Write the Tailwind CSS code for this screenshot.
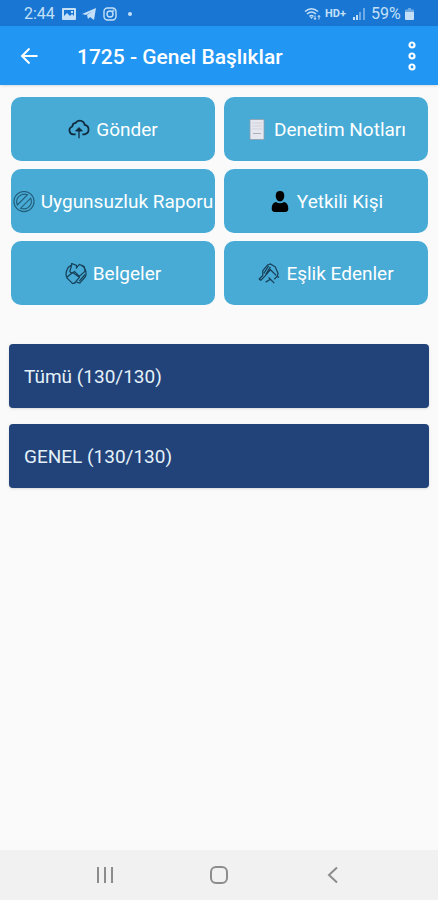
<!DOCTYPE html>
<html lang="tr">
<head>
    <meta charset="UTF-8">
    <meta name="viewport" content="width=device-width, initial-scale=1.0">
    <title>1725 - Genel Başlıklar</title>
    <script src="https://cdn.jsdelivr.net/npm/@tailwindcss/browser@4"></script>
</head>
<body class="min-h-screen flex flex-col bg-[#fafafa] font-[Roboto,sans-serif]">
    <!-- status bar -->
    <div class="h-[26px] bg-[#1976d2] text-[#c3e0f8] flex items-center justify-between pl-6 pr-6 pt-[2px]">
        <div class="flex items-center">
            <span class="text-base leading-5 w-[38px]">2:44</span>
            <svg class="w-[14px] h-3" viewBox="0 0 14 12"><path fill="currentColor" fill-rule="evenodd" d="M1 0h12a1 1 0 0 1 1 1v10a1 1 0 0 1-1 1H1a1 1 0 0 1-1-1V1a1 1 0 0 1 1-1zM2 2v6l3-3 3 3 2-2 2 2V2zM9 3h2v2H9z"/></svg>
            <svg class="w-[14px] h-3 ml-[6px]" viewBox="0 0 14 12"><path fill="currentColor" d="M0 6 14 0l-2 12-4-3-2 2-1-4 6-4-7 4z"/></svg>
            <svg class="w-[14px] h-[14px] ml-[7px]" viewBox="0 0 14 14" fill="none" stroke="currentColor" stroke-width="1.4"><rect x="1" y="1" width="12" height="12" rx="3.5"/><circle cx="7" cy="7" r="3"/><circle cx="10.4" cy="3.6" r=".4"/></svg>
            <span class="w-1 h-1 rounded-full bg-[#c3e0f8] ml-[11px]"></span>
        </div>
        <div class="flex items-center">
            <svg class="w-[17px] h-[14px]" viewBox="0 0 17 14" fill="none" stroke="currentColor" stroke-width="1.6"><path d="M1 4.500Q7.500-1 14 4.500M3 7Q7.500 3 12 7M5.500 9.500Q7.500 7.500 9.500 9.500"/><path d="M6 10h3l-1.500 2z" fill="currentColor" stroke="none"/><path d="M11 8.500v4M9.800 11l1.200 1.500 1.200-1.500M15 12.500v-4M13.800 10 15 8.500l1.200 1.500" stroke-width="1"/></svg>
            <span class="text-[11px] leading-5 font-bold ml-1 w-[24px]">HD+</span>
            <svg class="w-3 h-3 ml-1" viewBox="0 0 12 12" fill="currentColor"><path d="M0 9h2v3H0zM3 7h2v5H3z"/><path d="M6 4h2v8H6zM10 0h2v12h-2z" opacity=".5"/></svg>
            <span class="text-base leading-5 ml-[6px] w-[30px]">59%</span>
            <svg class="w-[9px] h-3 ml-1" viewBox="0 0 9 12" fill="currentColor"><path d="M3 0h3v1.500h2a1 1 0 0 1 1 1V4H0V2.500a1 1 0 0 1 1-1h2z" opacity=".5"/><path d="M0 4h9v7a1 1 0 0 1-1 1H1a1 1 0 0 1-1-1z"/></svg>
        </div>
    </div>

    <!-- toolbar -->
    <header class="h-[59px] bg-[#2196f3] text-white flex items-center pl-5 pr-4 shadow-sm">
        <button class="w-[18px] h-[18px]" aria-label="Geri">
            <svg class="w-[18px] h-[18px]" viewBox="0 0 18 18" fill="none" stroke="currentColor" stroke-width="2"><path d="M17.500 9H2.500M9.500 1.500 2 9l7.500 7.500"/></svg>
        </button>
        <h1 class="flex-1 ml-[39px] pt-[2px] text-[21px] leading-7 font-medium">1725 - Genel Başlıklar</h1>
        <button class="w-5 h-8 flex justify-center" aria-label="Menü">
            <svg class="w-2 h-8" viewBox="0 0 8 32" fill="none" stroke="currentColor" stroke-width="2.200"><circle cx="4" cy="5" r="2.500"/><circle cx="4" cy="16" r="2.500"/><circle cx="4" cy="27" r="2.500"/></svg>
        </button>
    </header>

    <main class="flex-1">
        <div class="grid grid-cols-2 gap-x-[9px] gap-y-2 pl-[11px] pr-[10px] pt-3 text-white text-[19px] leading-6">
            <button class="h-16 pt-[2px] rounded-[10px] bg-[#47abd6] flex items-center justify-center gap-[6px] whitespace-nowrap">
                <svg class="w-[22px] h-[22px] shrink-0" viewBox="0 0 23 23" fill="none" stroke="#10293a" stroke-width="1.800"><path d="M8 16H5.500a4.200 4.200 0 0 1-1-8.200A4 4 0 0 1 8 4a5.200 5.200 0 0 1 9.500 2.200A5 5 0 0 1 17.500 16H15"/><path d="M11.500 11v9" stroke-width="1.300"/><path d="m8 12.500 3.500-3.500 3.500 3.500z" fill="#10293a" stroke-width="1"/></svg>
                <span>Gönder</span>
            </button>
            <button class="h-16 pt-[2px] rounded-[10px] bg-[#47abd6] flex items-center justify-center gap-[6px] whitespace-nowrap">
                <svg class="w-[22px] h-[22px] shrink-0" viewBox="0 0 22 22"><path fill="#e6e6ef" stroke="#8e9eae" stroke-width=".8" d="M4 0.500h14v20H4z"/><path stroke="#cfd1da" d="M6 4h10M6 7h10M6 10h10"/><path stroke="#a9aebb" d="M7 14.500h8"/></svg>
                <span>Denetim Notları</span>
            </button>
            <button class="h-16 pt-[2px] rounded-[10px] bg-[#47abd6] flex items-center justify-center gap-[6px] whitespace-nowrap">
                <svg class="w-[22px] h-[22px] shrink-0" viewBox="0 0 23 23" fill="none" stroke="#245d79" stroke-width="1.200"><circle cx="11.500" cy="11" r="10.500"/><path d="M4.500 14.500A8 8 0 0 1 15 4zM8 18A8 8 0 0 0 18.500 7.500z"/></svg>
                <span>Uygunsuzluk Raporu</span>
            </button>
            <button class="h-16 pt-[2px] rounded-[10px] bg-[#47abd6] flex items-center justify-center gap-[6px] whitespace-nowrap">
                <svg class="w-[22px] h-[22px] shrink-0" viewBox="0 0 22 22" fill="#000"><path d="M11 0c3 0 4.300 2 4.300 4.800S13.500 10.500 11 10.500 6.700 7.600 6.700 4.800 8 0 11 0z"/><path d="M7 11q4 2.500 8 0c3 .5 4.300 3 4.300 6.500 0 2-1 3.500-3 3.500H5.700c-2 0-3-1.500-3-3.500C2.700 14 4 11.500 7 11z"/></svg>
                <span>Yetkili Kişi</span>
            </button>
            <button class="h-16 pt-[2px] rounded-[10px] bg-[#47abd6] flex items-center justify-center gap-[6px] whitespace-nowrap">
                <svg class="w-[22px] h-[22px] shrink-0" viewBox="0 0 23 23" fill="none" stroke="#174058" stroke-width="1.300"><path d="M7 2A10.500 10.500 0 0 0 2 15.500l6 6 3-1M17 2a10.500 10.500 0 0 1 4.500 12l-6 7-3.500-1"/><path d="M7 2V.500l5 2V5l3-3.500 5 2 1 5-6 5.500-5-5-3 2-2-2zM2 15l6-5 7 5-5 6M21 12l-6 7"/></svg>
                <span>Belgeler</span>
            </button>
            <button class="h-16 pt-[2px] rounded-[10px] bg-[#47abd6] flex items-center justify-center gap-[6px] whitespace-nowrap">
                <svg class="w-[22px] h-[22px] shrink-0" viewBox="0 0 23 23" fill="none" stroke="#173f57" stroke-width="1.300"><path d="m1 17 4-4V8l5-6 3-1 5 3 3 7-1 3 2 1"/><path d="m1 17 2 1 5-5 5-6 6 6M6 11l5-8M8 12l5-8M8 20l5-3 4 4M13 17l-2-2M17 17l3-3"/></svg>
                <span>Eşlik Edenler</span>
            </button>
        </div>

        <div class="mt-[39px] px-[9px] flex flex-col gap-4 text-[#e4f1f8] text-[19px] leading-6">
            <button class="h-16 rounded bg-[#22437a] px-[15px] pt-[2px] text-left shadow-sm">Tümü (130/130)</button>
            <button class="h-16 rounded bg-[#22437a] px-[15px] pt-[2px] text-left shadow-sm">GENEL (130/130)</button>
        </div>
    </main>

    <!-- system navigation -->
    <nav class="h-[50px] bg-[#f1f1f1] text-[#8c8c8c] flex items-center justify-center gap-24">
        <button aria-label="Son uygulamalar"><svg class="w-[18px] h-[18px]" viewBox="0 0 18 18" fill="none" stroke="currentColor" stroke-width="2"><path d="M2 1v16M9 1v16M16 1v16"/></svg></button>
        <button aria-label="Ana ekran"><svg class="w-[18px] h-[18px]" viewBox="0 0 18 18" fill="none" stroke="currentColor" stroke-width="2"><rect x="1" y="1" width="16" height="16" rx="5"/></svg></button>
        <button aria-label="Geri"><svg class="w-[18px] h-[18px]" viewBox="0 0 18 18" fill="none" stroke="currentColor" stroke-width="2"><path d="M13 1.500 5 9l8 7.500"/></svg></button>
    </nav>
</body>
</html>
